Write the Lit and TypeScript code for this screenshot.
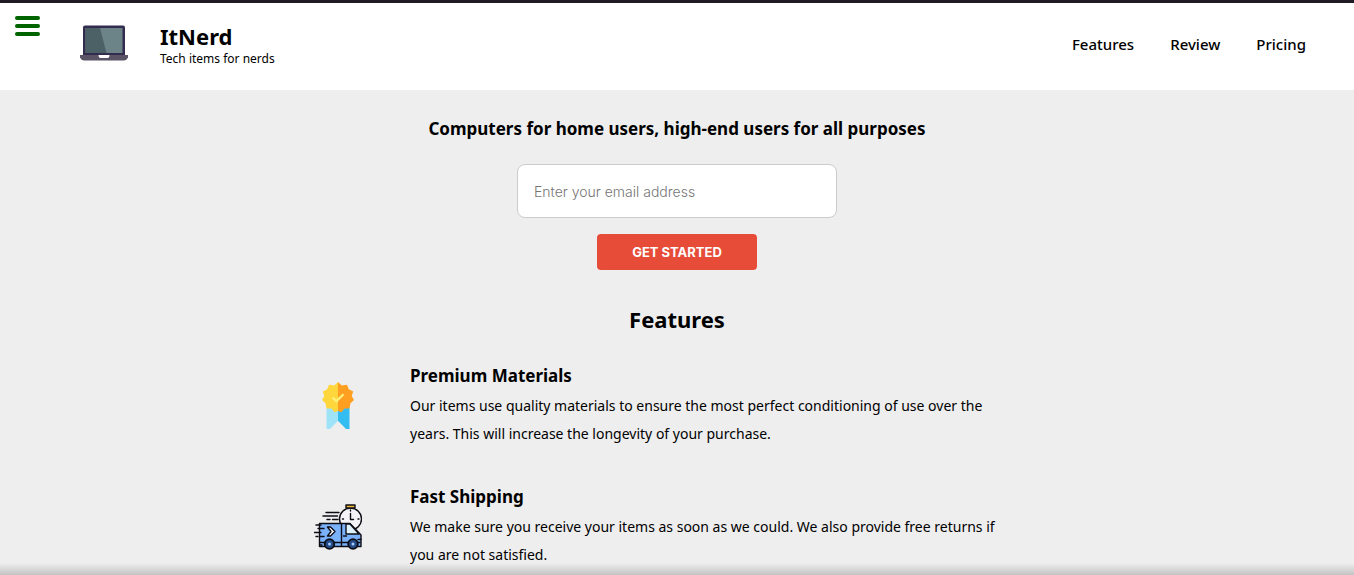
import { LitElement, html, css, svg } from "lit";
import { customElement } from "lit/decorators.js";

const laptop = svg`<svg class="logo" viewBox="0 1 48 48" aria-hidden="true">
  <path d="M3 38V8.500Q3 6.500 5 6.500H43Q45 6.500 45 8.500V38Z" fill="#332c4e"/>
  <path d="M5.500 9H42.500V34H5.500Z" fill="#6c8388"/>
  <path d="M5.500 9H20L26.500 34H5.500Z" fill="#4c6166"/>
  <path d="M0 36H48V38.500Q46.500 41.500 44 41.500H4Q1.500 41.500 0 38.500Z" fill="#5a5366"/>
  <path d="M18.500 36H29.500Q29.500 39 27.500 39H20.500Q18.500 39 18.500 36Z" fill="#fff"/>
</svg>`;

const medal = svg`<svg class="icon" viewBox="0 -1 48 49" preserveAspectRatio="none" aria-hidden="true">
  <path d="M12.500 26H24V39.500L16 48H12.500Z" fill="#9fe3f9"/>
  <path d="M24 26H35.500V48H32L24 39.500Z" fill="#33bdf0"/>
  <path d="M24 0L20.300 3.500L15 2.800L13.200 7.500L8.800 9.800L10.300 14.300L8 18.500L11.500 21.800L12.500 27L17.500 27L20.500 31L24 29.500Z" fill="#ffd63c"/>
  <path d="M24 0L27.700 3.500L33 2.800L34.800 7.500L39.200 9.800L37.700 14.300L40 18.500L36.500 21.800L35.500 27L30.500 27L27.500 31L24 29.500Z" fill="#ff9f22"/>
  <path d="M18.500 16L22.500 19.500L29.500 12.500" fill="none" stroke="#fff07a" stroke-width="2.400"/>
</svg>`;

const truck = svg`<svg class="icon" viewBox="0 -3 48 48" aria-hidden="true" fill="none" stroke="#0c0c14" stroke-width="1.400" stroke-linecap="round" stroke-linejoin="round">
  <circle cx="36.500" cy="14" r="11" fill="#f4f4f8"/>
  <path d="M32 0H41V3H32Z" fill="#eeb935"/>
  <path d="M36.500 8.500V14.500H39.500M28.500 14H29.500M44 14H45M36.500 5V6"/>
  <path d="M12 7.500H25M9 11H23.500M13 14.500H16M18.500 14.500H24"/>
  <path d="M5.500 18.500H36L47 30V41.500H5.500Z" fill="#79b1fa"/>
  <path d="M32 19H36L45 29H32Z" fill="#dff2fc"/>
  <path d="M27.500 18.500V41M6 37.500H46M29.500 31H32.500M44 34.500H47"/>
  <path d="M13.500 22H16.500L21 26.500L16.500 31H13.500L17 26.500Z" fill="#fff"/>
  <path d="M2 20H7M4 23.500H10M0 27.500H7M2 31.500H4M6 31.500H10M6 40H8"/>
  <circle cx="15.500" cy="39" r="4.800" fill="#244b86" stroke-width="1.800"/>
  <circle cx="39" cy="39" r="4.800" fill="#244b86" stroke-width="1.800"/>
  <circle cx="15.500" cy="39" r="1.500" fill="#a5cbff" stroke="none"/>
  <circle cx="39" cy="39" r="1.500" fill="#a5cbff" stroke="none"/>
</svg>`;

const features = [
  {
    icon: medal,
    title: "Premium Materials",
    text: "Our items use quality materials to ensure the most perfect conditioning of use over the years. This will increase the longevity of your purchase.",
  },
  {
    icon: truck,
    title: "Fast Shipping",
    text: "We make sure you receive your items as soon as we could. We also provide free returns if you are not satisfied.",
  },
];

@customElement("app-root")
export class AppRoot extends LitElement {
  static styles = css`
    :host {
      display: block;
      position: relative;
      height: 100vh;
      overflow: hidden;
      box-sizing: border-box;
      border-top: 3px solid #1e1b24;
      background: #eee;
      color: #000;
      font-family: "Noto Sans", sans-serif;
    }
    :host::after {
      content: "";
      position: absolute;
      inset: auto 0 0;
      height: 12px;
      background: linear-gradient(transparent, rgba(0, 0, 0, 0.18));
      pointer-events: none;
    }
    * {
      box-sizing: border-box;
      margin: 0;
    }
    .header {
      display: flex;
      align-items: center;
      height: 87px;
      padding: 0 48px 6px 80px;
      background: #fff;
    }
    .menu {
      position: absolute;
      top: 13px;
      left: 15px;
      display: grid;
      gap: 4px;
      width: 25px;
      padding: 0;
      border: 0;
      background: none;
      cursor: pointer;
    }
    .bar {
      height: 4px;
      border-radius: 2px;
      background: #006400;
    }
    .logo,
    .icon {
      display: block;
      width: 48px;
      height: 48px;
    }
    .brand {
      margin-left: 32px;
    }
    .name {
      font-size: 22px;
      line-height: 30px;
      font-weight: 700;
    }
    .tagline {
      font-size: 12px;
      line-height: 16px;
    }
    .nav {
      display: flex;
      gap: 36px;
      margin-left: auto;
    }
    .link {
      color: inherit;
      font-size: 15px;
      line-height: 24px;
      font-weight: 500;
      text-decoration: none;
    }
    .hero {
      display: flex;
      flex-direction: column;
      align-items: center;
      gap: 16px;
      padding-top: 26px;
    }
    .lead {
      margin-bottom: 6px;
      font-size: 17px;
      line-height: 26px;
      font-weight: 700;
      text-align: center;
    }
    .email {
      width: 320px;
      height: 54px;
      padding: 0 16px;
      border: 1px solid #ccc;
      border-radius: 8px;
      background: #fff;
      font: 300 14px Inter, sans-serif;
    }
    .email::placeholder {
      color: #757575;
      opacity: 1;
    }
    .submit {
      width: 160px;
      height: 36px;
      border: 0;
      border-radius: 4px;
      background: #e64c38;
      color: #fff;
      font: 700 13px Inter, sans-serif;
      cursor: pointer;
    }
    .features {
      width: min(726px, 100% - 32px);
      margin: 32px auto 0;
    }
    .heading {
      margin-bottom: 26px;
      font-size: 22px;
      line-height: 34px;
      text-align: center;
    }
    .feature {
      display: grid;
      grid-template-columns: 48px 1fr;
      align-items: center;
      gap: 48px;
      margin-bottom: 35px;
    }
    .title {
      font-size: 17px;
      line-height: 28px;
      margin-bottom: 2px;
    }
    .text {
      max-width: 600px;
      font-size: 14px;
      line-height: 28px;
    }
  `;

  render() {
    return html`
      <header class="header">
        <button class="menu" aria-label="Menu">
          <span class="bar"></span><span class="bar"></span><span class="bar"></span>
        </button>
        ${laptop}
        <div class="brand">
          <h1 class="name">ItNerd</h1>
          <p class="tagline">Tech items for nerds</p>
        </div>
        <nav class="nav">
          <a class="link" href="#features">Features</a>
          <a class="link" href="#review">Review</a>
          <a class="link" href="#pricing">Pricing</a>
        </nav>
      </header>
      <main>
        <form class="hero" @submit=${(e: Event) => e.preventDefault()}>
          <h2 class="lead">Computers for home users, high-end users for all purposes</h2>
          <input class="email" type="email" aria-label="Email address" placeholder="Enter your email address" />
          <button class="submit">GET STARTED</button>
        </form>
        <section class="features" id="features">
          <h2 class="heading">Features</h2>
          ${features.map(
            (f) => html`<article class="feature">
              ${f.icon}
              <div>
                <h3 class="title">${f.title}</h3>
                <p class="text">${f.text}</p>
              </div>
            </article>`
          )}
        </section>
      </main>
    `;
  }
}
